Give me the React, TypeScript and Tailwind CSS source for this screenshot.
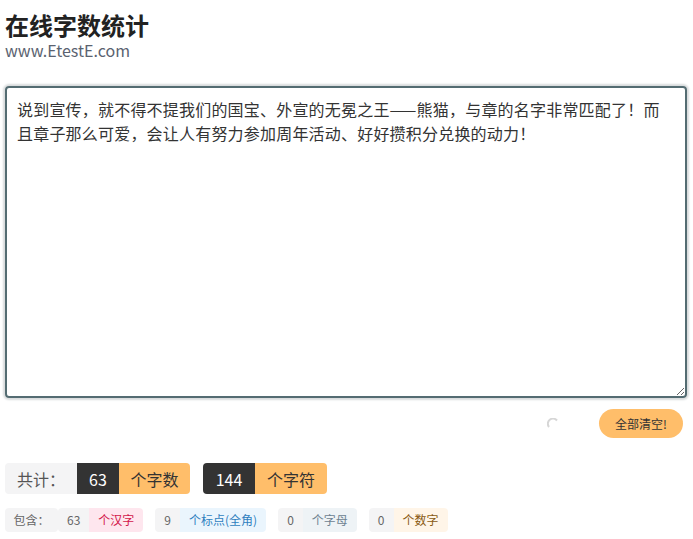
const text =
  "说到宣传，就不得不提我们的国宝、外宣的无冕之王——熊猫，与章的名字非常匹配了！而且章子那么可爱，会让人有努力参加周年活动、好好攒积分兑换的动力！";

const font = { fontFamily: '"Noto Sans CJK SC", "Liberation Sans", sans-serif' };

const Spinner = () => (
  <svg width="12" height="12" viewBox="0 0 12 12" className="mr-[40px]">
    <path d="M10 2.5 A5 5 0 0 0 2 9" fill="none" stroke="#d6d6d6" strokeWidth="2" />
  </svg>
);

const SmallStat: React.FC<{ num: number; label: string; tone: string }> = ({ num, label, tone }) => (
  <div className="flex h-[24px] items-stretch overflow-hidden rounded-[4px]">
    <span className="flex items-center justify-center bg-[#f4f4f5] px-[9px] text-[#666]">{num}</span>
    <span className={`flex items-center px-[9px] ${tone}`}>{label}</span>
  </div>
);

export default function App() {
  return (
    <div className="min-h-[539px] bg-white px-[5px] pt-[11px]" style={font}>
      <h1 className="text-[24px] font-bold leading-[28px] text-[#222]">在线字数统计</h1>
      <p className="mt-[1px] text-[16px] leading-[20px] text-[#5a6270]">www.EtestE.com</p>

      <div className="mt-[26px]">
        <textarea
          readOnly
          defaultValue={text}
          className="block h-[312px] w-[682px] resize-y rounded-[4px] border-2 border-[#546c72] pl-[10px] pr-[15px] pt-[9px] pb-[6px] text-[16px] leading-[24px] tracking-[0.2px] text-[#333] shadow-[0_0_2px_2px_#d9dcdd] outline-none"
          style={font}
        />
      </div>

      <div className="mt-[11px] flex items-center justify-end pr-[5px]">
        <Spinner />
        <button className="h-[29px] w-[84px] rounded-full bg-[#ffbe6a] text-[12px] text-[#333]">全部清空!</button>
      </div>

      <div className="mt-[25px] flex items-center text-[16px]">
        <span className="flex h-[31px] w-[72px] items-center justify-center rounded-l-[4px] bg-[#f4f4f5] text-[#555]">共计：</span>
        <div className="flex h-[31px] overflow-hidden rounded-r-[4px]">
          <span className="flex w-[42px] items-center justify-center bg-[#333] text-white">63</span>
          <span className="flex w-[71px] items-center justify-center bg-[#ffbe6a] text-[#333]">个字数</span>
        </div>
        <div className="ml-[13px] flex h-[31px] overflow-hidden rounded-[4px]">
          <span className="flex w-[52px] items-center justify-center bg-[#333] text-white">144</span>
          <span className="flex w-[72px] items-center justify-center bg-[#ffbe6a] text-[#333]">个字符</span>
        </div>
      </div>

      <div className="mt-[14px] flex items-center gap-[12px] text-[12px]">
        <div className="flex">
          <span className="flex h-[24px] w-[53px] items-center justify-center rounded-[4px] bg-[#f4f4f5] text-[#666]">包含：</span>
          <SmallStat num={63} label="个汉字" tone="bg-[#fee6ee] text-[#d3164a]" />
        </div>
        <SmallStat num={9} label="个标点(全角)" tone="bg-[#eaf5fd] text-[#2f7fbf]" />
        <SmallStat num={0} label="个字母" tone="bg-[#eef3f6] text-[#6d8291]" />
        <SmallStat num={0} label="个数字" tone="bg-[#fff5e8] text-[#8a5a12]" />
      </div>
    </div>
  );
}
